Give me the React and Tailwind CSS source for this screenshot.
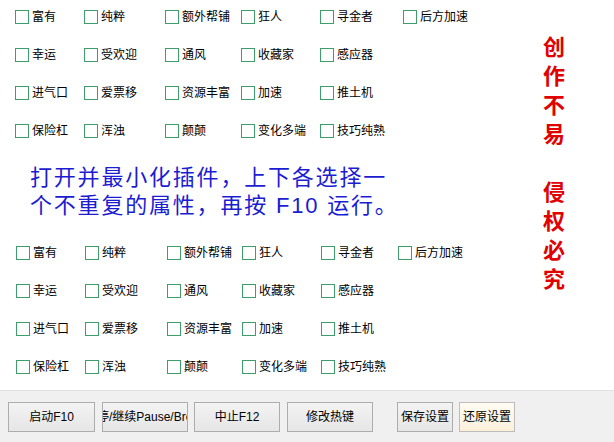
import React from "react";

const FONT = { fontFamily: '"Liberation Sans", "Noto Sans CJK SC", sans-serif' };

const rows = [
  ["富有", "纯粹", "额外帮铺", "狂人", "寻金者", "后方加速"],
  ["幸运", "受欢迎", "通风", "收藏家", "感应器"],
  ["进气口", "爱票移", "资源丰富", "加速", "推土机"],
  ["保险杠", "浑浊", "颠颠", "变化多端", "技巧纯熟"],
];

const topCols = ["w-[69px]", "w-[81px]", "w-[76px]", "w-[79px]", "w-[83px]", "w-[70px]"];
const botCols = ["w-[69px]", "w-[82px]", "w-[75px]", "w-[79px]", "w-[77px]", "w-[70px]"];

function Check({ label, w }) {
  return (
    <div className={`${w} flex items-center gap-[3px] shrink-0`}>
      <div className="w-[14px] h-[14px] border border-[#3f9d6b] bg-white shrink-0" />
      <span className="text-[12px] leading-[14px] text-black whitespace-nowrap">{label}</span>
    </div>
  );
}

function Grid({ cols }) {
  return (
    <div className="flex flex-col gap-[23px]">
      {rows.map((r, i) => (
        <div key={i} className="flex h-[15px] items-center">
          {r.map((l, j) => (
            <Check key={j} label={l} w={cols[j]} />
          ))}
        </div>
      ))}
    </div>
  );
}

function Btn({ children, w, active }) {
  return (
    <div
      className={`${w} h-[30px] shrink-0 flex items-center justify-center overflow-hidden border text-[12px] text-black whitespace-nowrap ${
        active
          ? "border-[#bdbdbd] bg-gradient-to-b from-[#fefbf3] to-[#fcf0da]"
          : "border-[#adadad] bg-gradient-to-b from-[#f3f3f3] to-[#e6e6e6]"
      }`}
    >
      <span className="shrink-0">{children}</span>
    </div>
  );
}

export default function App() {
  return (
    <div className="w-[614px] h-[442px] bg-white flex flex-col overflow-hidden" style={FONT}>
      <div className="h-[390px] flex">
        <div className="w-[528px] flex flex-col">
          <div className="pt-[9px] pl-[15px]">
            <Grid cols={topCols} />
          </div>
          <div className="pl-[30px] mt-[26px] text-[22px] leading-[28px] tracking-[1.8px] text-[#1c1cd0] whitespace-nowrap">
            <div>打开并最小化插件，上下各选择一</div>
            <div>个不重复的属性，再按 F10 运行。</div>
          </div>
          <div className="pl-[16px] mt-[25px]">
            <Grid cols={botCols} />
          </div>
        </div>
        <div className="ml-[15px] pt-[33px] w-[24px] flex flex-col text-[22px] leading-[29px] font-bold text-[#e00000]">
          <div>创</div>
          <div>作</div>
          <div>不</div>
          <div>易</div>
          <div>&nbsp;</div>
          <div>侵</div>
          <div>权</div>
          <div>必</div>
          <div>究</div>
        </div>
      </div>
      <div className="flex-1 bg-[#f0f0f0] border-t border-[#e2e2e2] flex items-start pt-[11px] pl-[8px]">
        <Btn w="w-[87px]">启动F10</Btn>
        <div className="w-[7px]" />
        <Btn w="w-[86px]">暂停/继续Pause/Break</Btn>
        <div className="w-[6px]" />
        <Btn w="w-[86px]">中止F12</Btn>
        <div className="w-[7px]" />
        <Btn w="w-[86px]">修改热键</Btn>
        <div className="w-[24px]" />
        <Btn w="w-[56px]">保存设置</Btn>
        <div className="w-[6px]" />
        <Btn w="w-[56px]" active>还原设置</Btn>
      </div>
    </div>
  );
}
